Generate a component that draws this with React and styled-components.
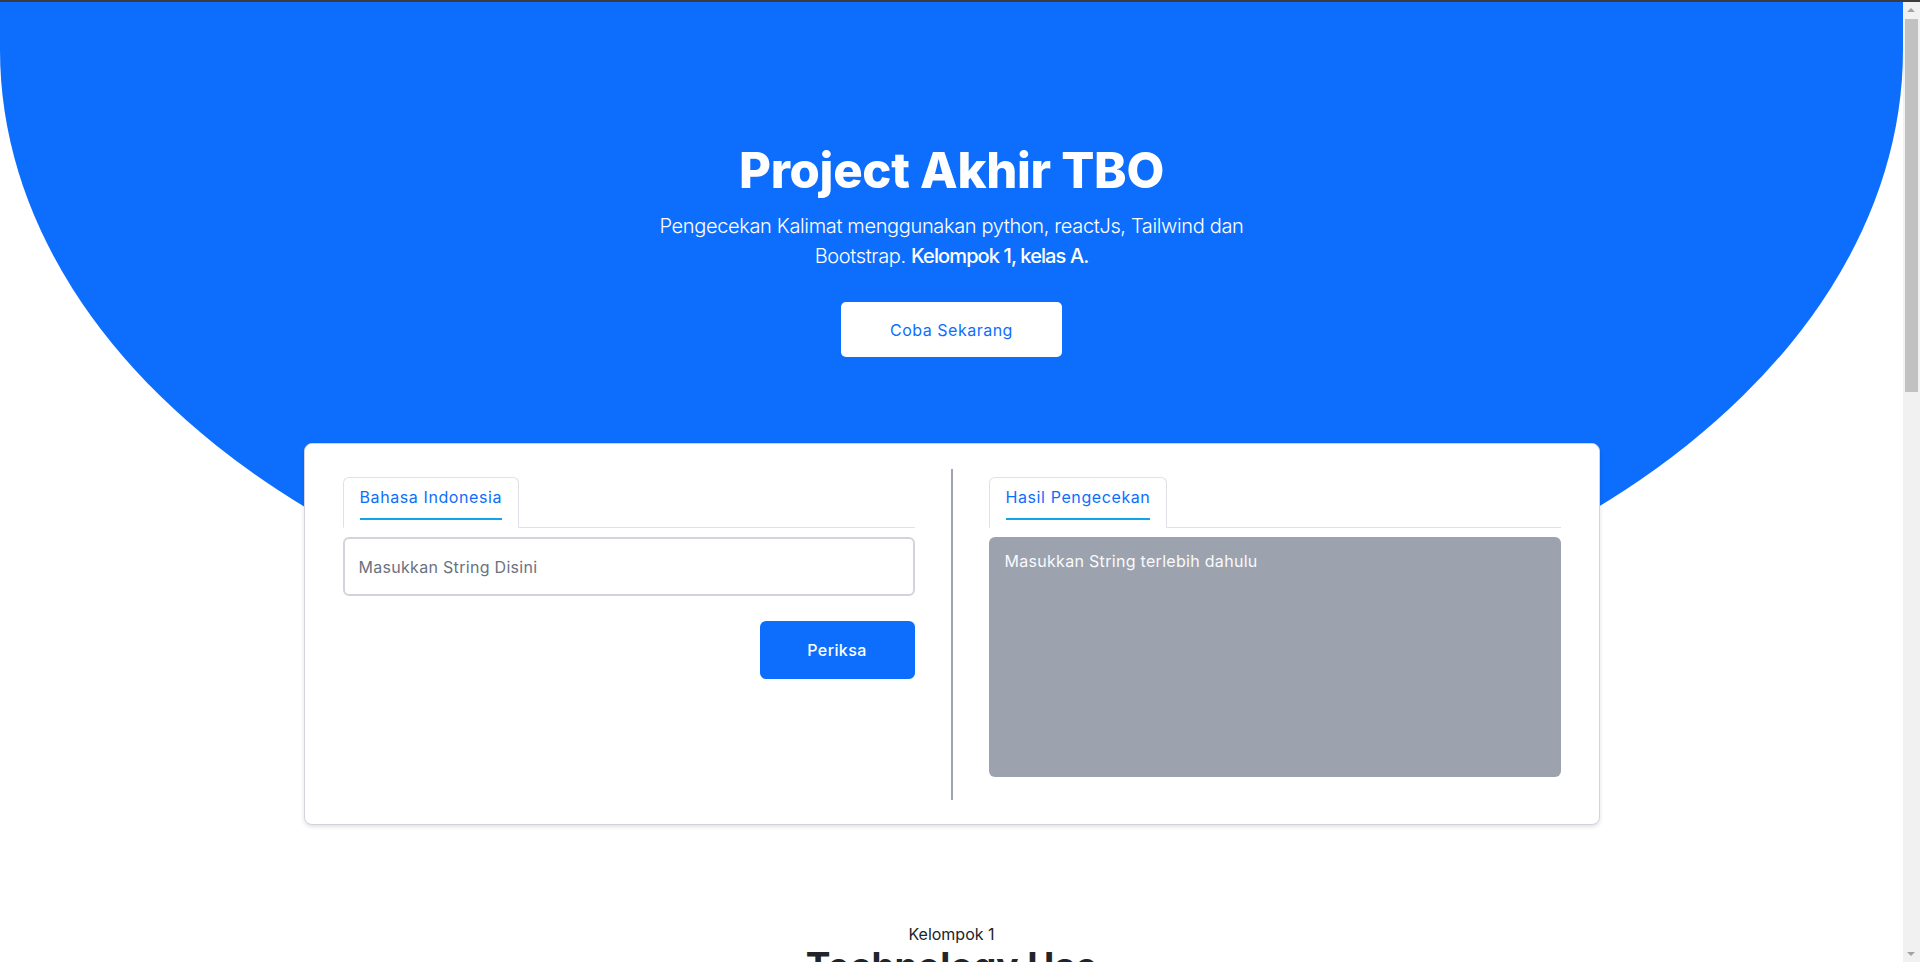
import { useState } from 'react'
import styled, { createGlobalStyle } from 'styled-components'

const GlobalStyle = createGlobalStyle`
  body {
    margin: 0 17px 0 0;
    font-family: Inter, "Open Sans", sans-serif;
    color: #212529;
    background: #fff;
  }
  * {
    box-sizing: border-box;
  }
`

// the window frame line and the classic scrollbar seen in the screenshot
const TopStrip = styled.div`
  position: fixed;
  top: 0;
  left: 0;
  right: 0;
  height: 2px;
  background: #3b3b3b;
  z-index: 20;
`

const ScrollTrack = styled.div`
  position: fixed;
  top: 0;
  right: 0;
  bottom: 0;
  width: 17px;
  background: #f1f1f1;
  z-index: 10;
`

const ScrollThumb = styled.div`
  position: absolute;
  top: 19px;
  left: 2px;
  width: 13px;
  height: 373px;
  background: #c1c1c1;
`

const ScrollArrow = styled.div`
  position: absolute;
  left: 4px;
  width: 0;
  height: 0;
  border-left: 4.5px solid transparent;
  border-right: 4.5px solid transparent;
  ${(p) =>
    p.down
      ? 'bottom: 6px; border-top: 4.5px solid #a3a3a3;'
      : 'top: 8px; border-bottom: 4.5px solid #a3a3a3;'}
`

const Hero = styled.section`
  height: 673px;
  background: #0d6efd;
  border-radius: 0 0 50% 50% / 0 0 623px 623px;
  display: flex;
  flex-direction: column;
  align-items: center;
  padding-top: 141px;
  color: #fff;
  text-align: center;
`

const Title = styled.h1`
  margin: 0;
  font-size: 49px;
  line-height: 60px;
  font-weight: 800;
  letter-spacing: -0.3px;
`

const Lead = styled.p`
  margin: 10px 0 0;
  font-size: 20px;
  line-height: 30px;
  font-weight: 300;
  letter-spacing: -0.35px;
  strong {
    font-weight: 500;
    letter-spacing: -0.9px;
  }
`

const TryButton = styled.button`
  margin-top: 31px;
  width: 221px;
  height: 55px;
  border: none;
  border-radius: 5px;
  background: #fff;
  color: #0d6efd;
  font-family: inherit;
  font-size: 16px;
  letter-spacing: 0.5px;
  cursor: pointer;
`

const Card = styled.div`
  width: 1296px;
  margin: -230px auto 0;
  background: #fff;
  border: 1px solid #d1d5db;
  border-radius: 8px;
  box-shadow: 0 2px 4px rgba(0, 0, 0, 0.12);
  padding: 25px 38px 24px;
  display: flex;
`

const Column = styled.div`
  flex: 1;
  padding: 8px 0 23px;
  display: flex;
  flex-direction: column;
`

const Divider = styled.div`
  width: 2px;
  background: #a0a5ad;
  margin: 0 36px;
`

const TabBar = styled.div`
  display: flex;
  border-bottom: 1px solid #dee2e6;
`

const Tab = styled.div`
  margin-bottom: -1px;
  border: 1px solid #dee2e6;
  border-bottom-color: #fff;
  border-radius: 6px 6px 0 0;
  background: #fff;
  padding: 7px 16px;
`

const TabLabel = styled.span`
  display: block;
  color: #0d6efd;
  font-size: 16px;
  line-height: 24px;
  letter-spacing: 0.6px;
  padding-bottom: 9px;
  border-bottom: 2px solid #0ea5e9;
`

const Input = styled.input`
  margin-top: 9px;
  width: 100%;
  height: 59px;
  border: 2px solid #d1d5db;
  border-radius: 6px;
  padding: 0 14px;
  font-family: inherit;
  font-size: 16px;
  letter-spacing: 0.3px;
  color: #374151;
  &::placeholder {
    color: #6b7280;
  }
  &:focus {
    outline: none;
    border-color: #93c5fd;
  }
`

const ButtonRow = styled.div`
  display: flex;
  justify-content: flex-end;
  margin-top: 25px;
`

const CheckButton = styled.button`
  width: 155px;
  height: 58px;
  border: none;
  border-radius: 6px;
  background: #0d6efd;
  color: #fff;
  font-family: inherit;
  font-size: 16px;
  font-weight: 500;
  letter-spacing: 0.4px;
  cursor: pointer;
`

const ResultBox = styled.div`
  margin-top: 9px;
  height: 240px;
  background: #9ca3af;
  border-radius: 6px;
  padding: 12px 16px;
  color: #f9fafb;
  font-size: 16px;
  line-height: 24px;
  letter-spacing: 0.3px;
`

const TechSection = styled.section`
  padding: 97px 0 80px;
  text-align: center;
`

const Kicker = styled.p`
  margin: 0;
  font-size: 16px;
  line-height: 24px;
`

const SectionTitle = styled.h2`
  margin: 0;
  font-size: 37px;
  line-height: 40px;
  font-weight: 700;
`

const TechGrid = styled.div`
  width: 1296px;
  margin: 40px auto 0;
  display: grid;
  grid-template-columns: repeat(4, 1fr);
  gap: 24px;
`

const TechItem = styled.div`
  border: 1px solid #dee2e6;
  border-radius: 8px;
  padding: 32px 16px;
  font-size: 18px;
  font-weight: 500;
`

const techs = ['Python', 'ReactJs', 'Tailwind', 'Bootstrap']

const App = () => {
  const [text, setText] = useState('')
  const [result, setResult] = useState('')

  const handleCheck = () => {
    setResult(text ? `Hasil untuk: ${text}` : '')
  }

  return (
    <>
      <GlobalStyle />
      <TopStrip />
      <ScrollTrack>
        <ScrollArrow />
        <ScrollThumb />
        <ScrollArrow down />
      </ScrollTrack>
      <Hero>
        <Title>Project Akhir TBO</Title>
        <Lead>
          Pengecekan Kalimat menggunakan python, reactJs, Tailwind dan
          <br />
          Bootstrap. <strong>Kelompok 1, kelas A.</strong>
        </Lead>
        <TryButton>Coba Sekarang</TryButton>
      </Hero>
      <Card>
        <Column>
          <TabBar>
            <Tab>
              <TabLabel>Bahasa Indonesia</TabLabel>
            </Tab>
          </TabBar>
          <Input
            type="text"
            value={text}
            onChange={(event) => setText(event.target.value)}
            placeholder="Masukkan String Disini"
          />
          <ButtonRow>
            <CheckButton onClick={handleCheck}>Periksa</CheckButton>
          </ButtonRow>
        </Column>
        <Divider />
        <Column>
          <TabBar>
            <Tab>
              <TabLabel>Hasil Pengecekan</TabLabel>
            </Tab>
          </TabBar>
          <ResultBox>{result || 'Masukkan String terlebih dahulu'}</ResultBox>
        </Column>
      </Card>
      <TechSection>
        <Kicker>Kelompok 1</Kicker>
        <SectionTitle>Technology Use</SectionTitle>
        <TechGrid>
          {techs.map((name) => (
            <TechItem key={name}>{name}</TechItem>
          ))}
        </TechGrid>
      </TechSection>
    </>
  )
}

export default App
